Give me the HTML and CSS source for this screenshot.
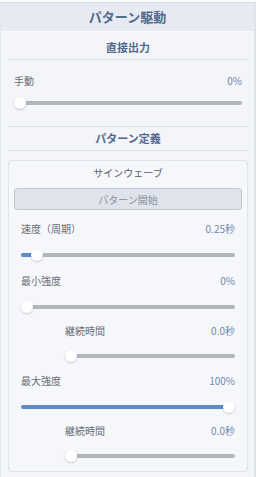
FILE: index.html
```html
<!DOCTYPE html>
<html lang="ja">
<head>
    <meta charset="UTF-8">
    <meta name="viewport" content="width=device-width, initial-scale=1.0">
    <title>パターン駆動</title>
    <link rel="stylesheet" href="styles.css">
</head>
<body>
    <div class="panel">
        <div class="panel-head">パターン駆動</div>
        <div class="panel-body">
            <div class="section-title">直接出力</div>
            <div class="direct">
                <div class="row">
                    <span class="label">手動</span>
                    <span class="value">0%</span>
                </div>
                <div class="slider"><div class="track"><div class="fill" style="width:0%"></div></div><div class="thumb" style="left:calc(6px + 0 * (100% - 12px))"></div></div>
            </div>

            <div class="section-title second">パターン定義</div>
            <div class="card">
                <div class="card-title">サインウェーブ</div>
                <button class="btn">パターン開始</button>
                <div class="fields">
                    <div class="field">
                        <div class="row">
                            <span class="label">速度（周期）</span>
                            <span class="value">0.25秒</span>
                        </div>
                        <div class="slider"><div class="track"><div class="fill" style="width:calc(6px + 0.05 * (100% - 12px))"></div></div><div class="thumb" style="left:calc(6px + 0.05 * (100% - 12px))"></div></div>
                    </div>
                    <div class="field">
                        <div class="row">
                            <span class="label">最小強度</span>
                            <span class="value">0%</span>
                        </div>
                        <div class="slider"><div class="track"><div class="fill" style="width:0%"></div></div><div class="thumb" style="left:calc(6px + 0 * (100% - 12px))"></div></div>
                    </div>
                    <div class="field sub">
                        <div class="row">
                            <span class="label">継続時間</span>
                            <span class="value">0.0秒</span>
                        </div>
                        <div class="slider"><div class="track"><div class="fill" style="width:0%"></div></div><div class="thumb" style="left:calc(6px + 0 * (100% - 12px))"></div></div>
                    </div>
                    <div class="field">
                        <div class="row">
                            <span class="label">最大強度</span>
                            <span class="value">100%</span>
                        </div>
                        <div class="slider"><div class="track"><div class="fill" style="width:100%"></div></div><div class="thumb" style="left:calc(6px + 1 * (100% - 12px))"></div></div>
                    </div>
                    <div class="field sub">
                        <div class="row">
                            <span class="label">継続時間</span>
                            <span class="value">0.0秒</span>
                        </div>
                        <div class="slider"><div class="track"><div class="fill" style="width:0%"></div></div><div class="thumb" style="left:calc(6px + 0 * (100% - 12px))"></div></div>
                    </div>
                </div>
            </div>
        </div>
    </div>
</body>
</html>
```

FILE: styles.css
```css
*{
    margin: 0;
    padding: 0;
    box-sizing: border-box;
}
body{
    height: 100vh;
    background-color: #fbfbfd;
    padding-top: 2px;
    font-family: "Noto Sans CJK JP", "Noto Sans", sans-serif;
    font-size: 10px;
    color: #686c74;
}
.panel{
    height: 475px;
    border-top: 1px solid #d9dde5;
    border-left: 1px solid #e4e7ed;
    border-right: 2px solid #dfe2e9;
    background-color: #f4f5f9;
}
.panel-head{
    height: 29px;
    line-height: 28px;
    text-align: center;
    font-size: 13px;
    font-weight: bold;
    color: #53698d;
    background-color: #e6eaf2;
    border-bottom: 1px solid #fafbfd;
}
.panel-body{
    padding: 0 6px 0 7px;
}
.section-title{
    height: 28px;
    line-height: 30px;
    text-align: center;
    font-size: 11px;
    font-weight: bold;
    color: #52698f;
    border-bottom: 1px solid #dcdfe6;
}
.section-title.second{
    height: 25px;
    line-height: 23px;
    border-top: 1px solid #dcdfe6;
}
.direct{
    padding: 13px 6px 12px 6px;
    display: flex;
    flex-direction: column;
    gap: 3px;
}
.row{
    height: 16px;
    line-height: 16px;
    display: flex;
    justify-content: space-between;
}
.value{
    color: #6f87ac;
}
.slider{
    height: 22px;
    position: relative;
    display: flex;
    align-items: center;
}
.track{
    width: 100%;
    height: 4px;
    border-radius: 2px;
    background-color: #b2b5bc;
    overflow: hidden;
}
.fill{
    height: 100%;
    background-color: #5c8bcd;
}
.thumb{
    position: absolute;
    top: 5px;
    width: 12px;
    height: 12px;
    margin-left: -6px;
    border-radius: 50%;
    background-color: #ffffff;
    box-shadow: 0 1px 2px rgba(60, 70, 90, 0.25);
}
.card{
    margin-top: 9px;
    border: 1px solid #e1e4ea;
    border-radius: 4px;
    background-color: #f6f7fa;
    padding: 4px 5px 5px 5px;
}
.card-title{
    height: 16px;
    line-height: 16px;
    text-align: center;
    color: #5d6169;
}
.btn{
    display: block;
    width: 100%;
    height: 22px;
    margin-top: 7px;
    border: 1px solid #c3c8d3;
    border-radius: 3px;
    background-color: #dfe3ec;
    color: #8c919a;
    font-family: inherit;
    font-size: 10px;
}
.fields{
    padding: 11px 7px 0 7px;
    display: flex;
    flex-direction: column;
    gap: 7px;
}
.field{
    display: flex;
    flex-direction: column;
    gap: 7px;
}
.field.sub{
    margin-left: 44px;
    gap: 6px;
    margin-top: -2px;
    margin-bottom: -1px;
}
```
